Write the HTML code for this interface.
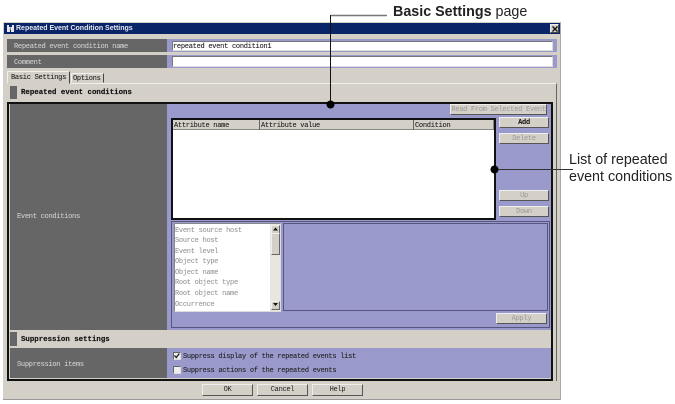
<!DOCTYPE html>
<html><head><meta charset="utf-8">
<style>
html,body{margin:0;padding:0;background:#fff;width:675px;height:404px;overflow:hidden}
body{filter:blur(.3px)}
div,span{position:absolute;box-sizing:border-box}
.m{font-family:"Liberation Mono",monospace;font-size:7px;letter-spacing:-.27px;line-height:10px;white-space:pre;color:#222;-webkit-text-stroke:.1px currentColor}
.w{color:#ddd}
.b{font-weight:bold;color:#111;font-size:7.4px;letter-spacing:0;-webkit-text-stroke:.15px #111}
.btn{background:#d4d0c8;border:1px solid;border-color:#eee #555 #555 #eee;text-align:center;font-family:"Liberation Mono",monospace;font-size:7px;letter-spacing:-.27px;line-height:10px;color:#999}
.inp{background:#fff;border:1px solid;border-color:#777 #ddd #ddd #777}
.a{font-family:"Liberation Sans",sans-serif;font-size:14.3px;line-height:17px;color:#222;white-space:pre}
</style></head><body>
<!-- dialog -->
<div style="left:3px;top:22px;width:558px;height:378px;background:#d4d0c8;border-right:1px solid #aaa;border-bottom:1px solid #999"></div>
<div style="left:4px;top:23px;width:556px;height:11px;background:#0a2468"></div>
<svg style="position:absolute;left:6px;top:24px" width="9" height="9" viewBox="0 0 9 9"><path d="M1 1h2v2h3V1h2v7H5V6H4v2H1z" fill="#e8e8e8"/><path d="M4.200 3.500v4" stroke="#0a2468" stroke-width=".6"/></svg>
<div style="left:16px;top:23px;height:11px;font:bold 7px/11px 'Liberation Sans',sans-serif;color:#e8eaf2;white-space:pre">Repeated Event Condition Settings</div>
<div style="left:550px;top:24px;width:9px;height:9px;background:#d4d0c8;border:1px solid;border-color:#eee #444 #444 #eee"></div>
<svg style="position:absolute;left:552px;top:26px" width="6" height="6" viewBox="0 0 6 6"><path d="M.5.5l5 5M5.500.5l-5 5" stroke="#111" stroke-width="1.300"/></svg>

<!-- rows -->
<div style="left:7px;top:39px;width:160px;height:13px;background:#666"></div>
<div style="left:167px;top:39px;width:390px;height:13px;background:#9999cc"></div>
<div class="inp" style="left:172px;top:41px;width:381px;height:10px"></div>
<div class="m" style="left:173px;top:42px">repeated event condition1</div>
<div class="m w" style="left:14px;top:42px;color:#ccc">Repeated event condition name</div>
<div style="left:7px;top:55px;width:160px;height:13px;background:#666"></div>
<div style="left:167px;top:55px;width:390px;height:13px;background:#9999cc"></div>
<div class="inp" style="left:172px;top:56px;width:381px;height:11px"></div>
<div class="m w" style="left:14px;top:58px;color:#ccc">Comment</div>

<!-- tabs -->
<div style="left:7px;top:83px;width:550px;height:298px;border-top:1px solid #f2f0ea;border-right:1px solid #666"></div>
<div style="left:7px;top:71px;width:63px;height:13px;background:#d4d0c8;border:1px solid;border-color:#f2f0ea #444 #d4d0c8 #f2f0ea"></div>
<div class="m" style="left:11px;top:73px">Basic Settings</div>
<div style="left:71px;top:73px;width:33px;height:10px;background:#d4d0c8;border:1px solid;border-color:#f2f0ea #444 #d4d0c8 #f2f0ea"></div>
<div class="m" style="left:73px;top:74px">Options</div>

<!-- section 1 -->
<div style="left:10px;top:86px;width:7px;height:13px;background:#666"></div>
<div class="m b" style="left:21px;top:88px">Repeated event conditions</div>

<!-- frame -->
<div style="left:10px;top:104px;width:157px;height:226px;background:#666"></div>
<div style="left:167px;top:104px;width:385px;height:226px;background:#9999cc"></div>
<div class="m w" style="left:17px;top:212px;color:#ccc">Event conditions</div>

<div class="btn" style="left:450px;top:104px;width:97px;height:11px">Read From Selected Event</div>
<div class="btn" style="left:499px;top:117px;width:50px;height:11px;color:#111;font-weight:bold">Add</div>
<div class="btn" style="left:499px;top:133px;width:50px;height:11px">Delete</div>
<div class="btn" style="left:499px;top:190px;width:50px;height:11px">Up</div>
<div class="btn" style="left:499px;top:206px;width:50px;height:11px">Down</div>

<!-- table -->
<div style="left:171px;top:118px;width:325px;height:102px;background:#fff;border:2px solid #111"></div>
<div style="left:173px;top:120px;width:321px;height:10px;background:#d4d0c8;border-bottom:1px solid #888"></div>
<div style="left:259px;top:120px;width:1px;height:10px;background:#666"></div>
<div style="left:413px;top:120px;width:1px;height:10px;background:#666"></div>
<div style="left:493px;top:120px;width:1px;height:10px;background:#888"></div>
<div class="m" style="left:174px;top:120.500px">Attribute name</div>
<div class="m" style="left:261px;top:120.500px">Attribute value</div>
<div class="m" style="left:415px;top:120.500px">Condition</div>

<!-- lower group -->
<div style="left:171px;top:221px;width:379px;height:107px;border:1px solid #555580"></div>
<div style="left:174px;top:223px;width:107px;height:89px;background:#fff;border:1px solid;border-color:#888 #ddd #ddd #888"></div>
<div class="m" style="left:175px;top:225.500px;line-height:10.600px;color:#999">Event source host
Source host
Event level
Object type
Object name
Root object type
Root object name
Occurrence</div>
<div style="left:270px;top:224px;width:10px;height:87px;background:#e8e6e0"></div>
<div style="left:271px;top:225px;width:9px;height:9px;background:#d4d0c8;border:1px solid;border-color:#eee #666 #666 #eee"></div>
<div style="left:271px;top:233px;width:9px;height:22px;background:#d4d0c8;border:1px solid;border-color:#eee #666 #666 #eee"></div>
<div style="left:271px;top:301px;width:9px;height:9px;background:#d4d0c8;border:1px solid;border-color:#eee #666 #666 #eee"></div>
<svg style="position:absolute;left:271px;top:225px" width="9" height="86" viewBox="0 0 9 86"><path d="M4.500 2.500l2.500 3h-5z" fill="#111"/><path d="M2 78h5l-2.500 3z" fill="#111"/></svg>
<div style="left:283px;top:223px;width:265px;height:88px;border:1px solid #555580"></div>
<div class="btn" style="left:496px;top:313px;width:51px;height:11px">Apply</div>

<!-- section 2 -->
<div style="left:10px;top:332px;width:7px;height:14px;background:#666"></div>
<div class="m b" style="left:21px;top:335px">Suppression settings</div>
<div style="left:10px;top:348px;width:157px;height:30px;background:#666"></div>
<div style="left:167px;top:348px;width:385px;height:30px;background:#9999cc"></div>
<div class="m w" style="left:17px;top:360px;color:#ccc">Suppression items</div>
<div style="left:173px;top:352px;width:8px;height:8px;background:#eee;border:1px solid;border-color:#666 #ddd #ddd #666"></div>
<svg style="position:absolute;left:174px;top:353px" width="6" height="6" viewBox="0 0 6 6"><path d="M.5 2.500l1.800 2 3-4" fill="none" stroke="#111" stroke-width="1.200"/></svg>
<div class="m" style="left:183px;top:352px">Suppress display of the repeated events list</div>
<div style="left:173px;top:366px;width:8px;height:8px;background:#eee;border:1px solid;border-color:#666 #ddd #ddd #666"></div>
<div class="m" style="left:183px;top:366px">Suppress actions of the repeated events</div>

<!-- black frame -->
<div style="left:7px;top:102px;width:546px;height:279px;border:2px solid #111"></div>

<!-- bottom buttons -->
<div class="btn" style="left:202px;top:384px;width:51px;height:12px;color:#222">OK</div>
<div class="btn" style="left:257px;top:384px;width:51px;height:12px;color:#222">Cancel</div>
<div class="btn" style="left:312px;top:384px;width:51px;height:12px;color:#222">Help</div>

<!-- annotations -->
<svg style="position:absolute;left:0;top:0" width="675" height="404" viewBox="0 0 675 404">
<path d="M331 15.500H387" stroke="#777" stroke-width="1.500"/>
<path d="M330.500 15V104" stroke="#111" stroke-width="1"/>
<circle cx="330.500" cy="104.500" r="4" fill="#000"/>
<path d="M494 169.500H573" stroke="#333" stroke-width="1"/>
<circle cx="494.500" cy="169.500" r="4" fill="#000"/>
</svg>
<div class="a" style="left:393px;top:4px"><b>Basic Settings</b> page</div>
<div class="a" style="left:569px;top:152px">List of repeated</div>
<div class="a" style="left:569px;top:169px">event conditions</div>
</body></html>
